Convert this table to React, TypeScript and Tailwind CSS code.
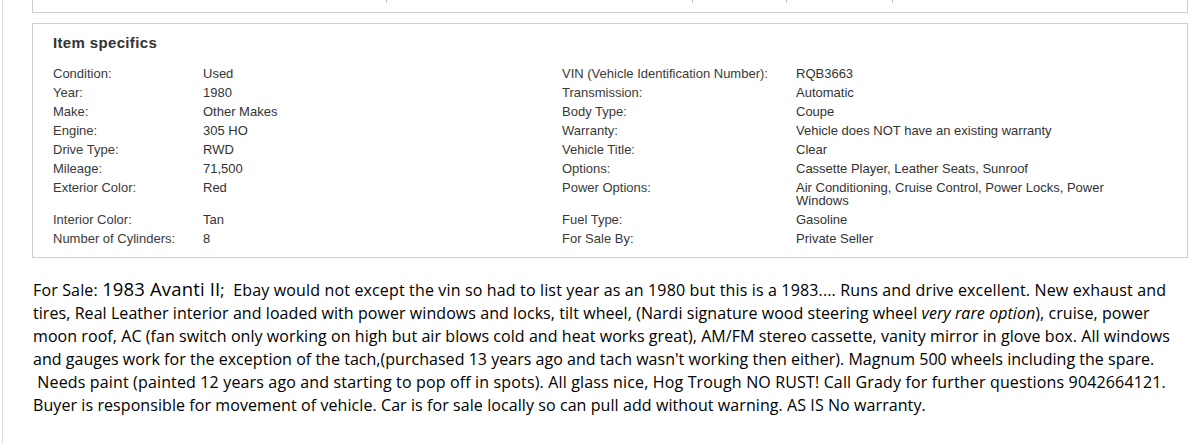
const specs: [string, string, string, string][] = [
  ['Condition:', 'Used', 'VIN (Vehicle Identification Number):', 'RQB3663'],
  ['Year:', '1980', 'Transmission:', 'Automatic'],
  ['Make:', 'Other Makes', 'Body Type:', 'Coupe'],
  ['Engine:', '305 HO', 'Warranty:', 'Vehicle does NOT have an existing warranty'],
  ['Drive Type:', 'RWD', 'Vehicle Title:', 'Clear'],
  ['Mileage:', '71,500', 'Options:', 'Cassette Player, Leather Seats, Sunroof'],
  [
    'Exterior Color:',
    'Red',
    'Power Options:',
    'Air Conditioning, Cruise Control, Power Locks, Power Windows',
  ],
  ['Interior Color:', 'Tan', 'Fuel Type:', 'Gasoline'],
  ['Number of Cylinders:', '8', 'For Sale By:', 'Private Seller'],
];

const cell = 'py-[3px] leading-[13px]';

export default function App() {
  return (
    <div className="h-[444px] w-[1192px] overflow-hidden bg-white pl-[2px]">
      <div className="h-full border-l border-[#dcdcdc] pr-[4px] pl-[29px]">
        {/* bottom of the description box above */}
        <div className="flex h-[13px] items-start border-x border-b border-[#cfcfcf]">
          <span className="ml-[353px] h-[3px] w-px bg-[#c4c4c4]" />
          <span className="ml-[305px] h-[3px] w-px bg-[#c4c4c4]" />
          <span className="ml-[93px] h-[3px] w-px bg-[#c4c4c4]" />
          <span className="ml-[105px] h-[3px] w-px bg-[#c4c4c4]" />
        </div>

        {/* Item specifics */}
        <div className="mt-[10px] border border-[#cfcfcf] px-[20px] pt-[10px] pb-[9px] font-['Liberation_Sans',Arial,sans-serif] text-[#333]">
          <h2 className="mb-[12px] text-[15px] leading-[18px] font-bold tracking-[0.35px]">
            Item specifics
          </h2>
          <div className="grid grid-cols-[150px_359px_234px_340px] text-[13px]">
            {specs.map(([l1, v1, l2, v2]) => (
              <div key={l1} className="contents">
                <div className={`${cell} text-[#3a3a3a]`}>{l1}</div>
                <div className={cell}>{v1}</div>
                <div className={`${cell} text-[#3a3a3a]`}>{l2}</div>
                <div className={cell}>{v2}</div>
              </div>
            ))}
          </div>
        </div>

        {/* Seller description */}
        <div className="mt-[19px] pl-[1px] font-['Comic_Sans_MS','Open_Sans',sans-serif] text-[16px] leading-[23px] whitespace-pre text-black">
          <div className="tracking-[0.15px]">
            For Sale: <span className="text-[18.5px]">1983 Avanti II</span>;  Ebay would not except the vin so had to list year as an 1980 but this is a 1983.... Runs and drive excellent. New exhaust and
          </div>
          <div className="tracking-[0.065px]">
            tires, Real Leather interior and loaded with power windows and locks, tilt wheel, (Nardi signature wood steering wheel <i>very rare option</i>), cruise, power
          </div>
          <div className="tracking-[0.065px]">
            moon roof, AC (fan switch only working on high but air blows cold and heat works great), AM/FM stereo cassette, vanity mirror in glove box. All windows
          </div>
          <div className="tracking-[0.03px]">
            and gauges work for the exception of the tach,(purchased 13 years ago and tach wasn't working then either). Magnum 500 wheels including the spare.
          </div>
          <div className="tracking-[0.15px]">
            {' '}Needs paint (painted 12 years ago and starting to pop off in spots). All glass nice, Hog Trough NO RUST! Call Grady for further questions 9042664121.
          </div>
          <div className="tracking-[0.08px]">
            Buyer is responsible for movement of vehicle. Car is for sale locally so can pull add without warning. AS IS No warranty.
          </div>
        </div>
      </div>
    </div>
  );
}
